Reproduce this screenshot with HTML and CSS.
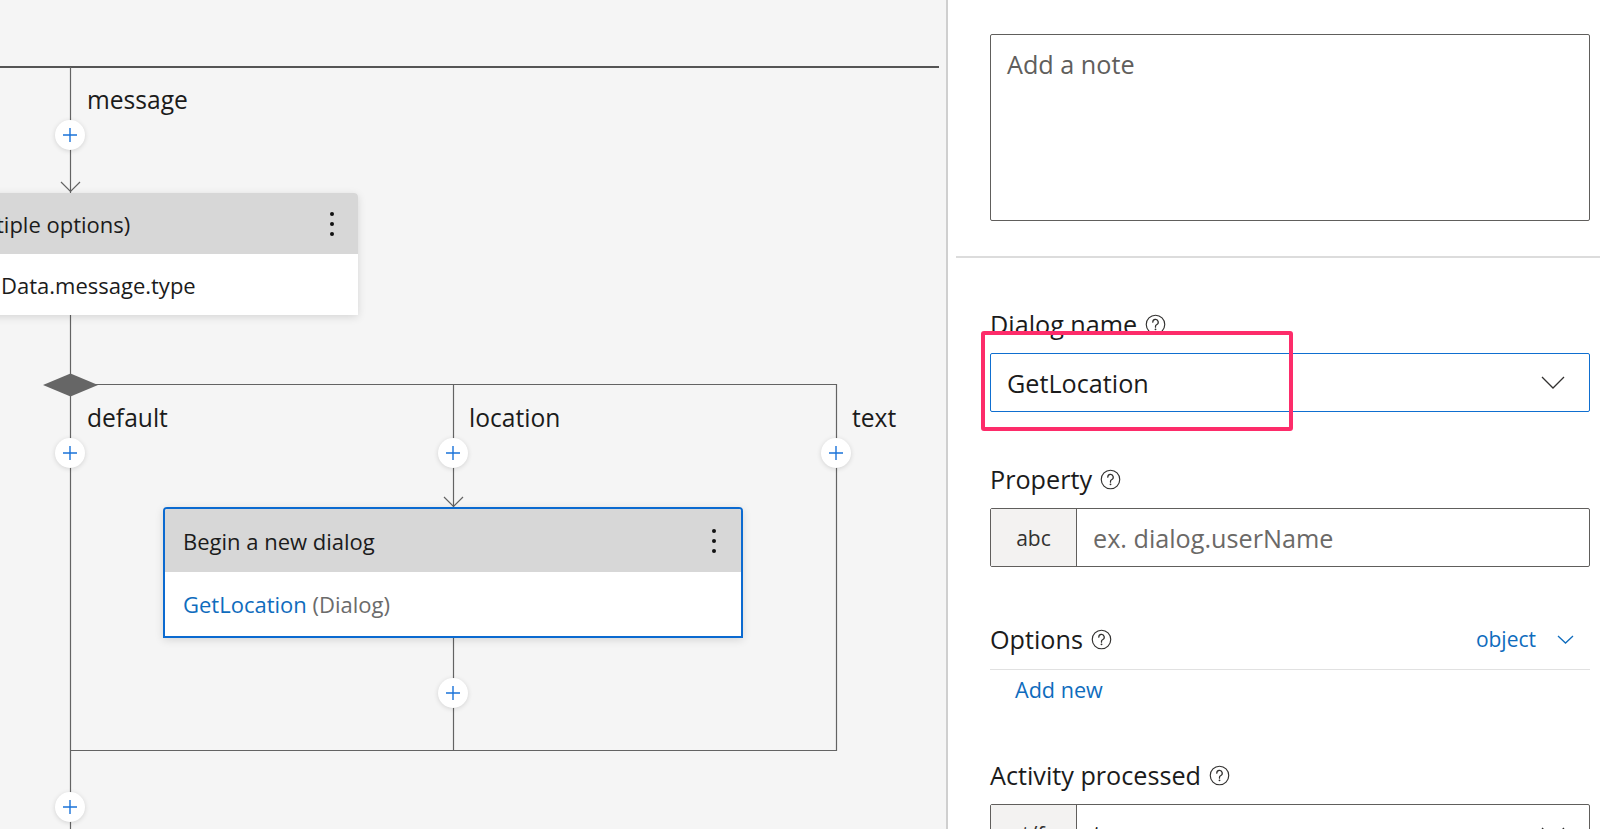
FILE: index.html
```html
<!DOCTYPE html>
<html lang="en">
<head>
<meta charset="utf-8">
<title>Dialog editor</title>
<link rel="stylesheet" href="styles.css">
</head>
<body>
<div class="app">
  <section class="canvas">
    <svg class="wires" width="946" height="829" viewBox="0 0 946 829">
      <line x1="0" y1="67" x2="939" y2="67" class="wire thick"/>
      <line x1="70.5" y1="67" x2="70.5" y2="193" class="wire"/>
      <polyline points="61,182 70.5,191.5 80,182" class="arrow"/>
      <line x1="70.5" y1="315" x2="70.5" y2="829" class="wire"/>
      <line x1="70" y1="384.5" x2="837" y2="384.5" class="wire"/>
      <line x1="453.5" y1="384" x2="453.5" y2="507" class="wire"/>
      <polyline points="444,497 453.5,506.5 463,497" class="arrow"/>
      <line x1="453.5" y1="638" x2="453.5" y2="750" class="wire"/>
      <line x1="836.5" y1="384" x2="836.5" y2="751" class="wire"/>
      <line x1="70" y1="750.5" x2="837" y2="750.5" class="wire"/>
      <polygon points="43,385 70.5,373.5 98,385 70.5,396.5" class="diamond"/>
    </svg>

    <span class="edge-label lbl-message">message</span>
    <span class="edge-label lbl-default">default</span>
    <span class="edge-label lbl-location">location</span>
    <span class="edge-label lbl-text">text</span>

    <div class="node node-switch">
      <div class="node-head"><span>tiple options)</span><span class="kebab"><i></i><i></i><i></i></span></div>
      <div class="node-body">Data.message.type</div>
    </div>

    <div class="node node-begin">
      <div class="node-head"><span>Begin a new dialog</span><span class="kebab"><i></i><i></i><i></i></span></div>
      <div class="node-body"><span class="link">GetLocation</span>&nbsp;<span class="muted">(Dialog)</span></div>
    </div>

    <button class="add p1" aria-label="Add"><svg width="14" height="14" viewBox="0 0 14 14"><path d="M7 0v14M0 7h14"/></svg></button>
    <button class="add p2" aria-label="Add"><svg width="14" height="14" viewBox="0 0 14 14"><path d="M7 0v14M0 7h14"/></svg></button>
    <button class="add p3" aria-label="Add"><svg width="14" height="14" viewBox="0 0 14 14"><path d="M7 0v14M0 7h14"/></svg></button>
    <button class="add p4" aria-label="Add"><svg width="14" height="14" viewBox="0 0 14 14"><path d="M7 0v14M0 7h14"/></svg></button>
    <button class="add p5" aria-label="Add"><svg width="14" height="14" viewBox="0 0 14 14"><path d="M7 0v14M0 7h14"/></svg></button>
    <button class="add p6" aria-label="Add"><svg width="14" height="14" viewBox="0 0 14 14"><path d="M7 0v14M0 7h14"/></svg></button>
  </section>

  <aside class="panel">
    <div class="note">Add a note</div>
    <div class="rule"></div>

    <div class="field field-dialog">
      <div class="label">Dialog name <svg class="help" width="21" height="21" viewBox="0 0 20 20"><circle cx="10" cy="10" r="8.8"/><path d="M7.4 7.8a2.6 2.6 0 1 1 3.6 2.4c-.7.3-1 .8-1 1.5v.9"/><circle class="dot" cx="10" cy="14.6" r=".9"/></svg></div>
      <div class="select">
        <span>GetLocation</span>
        <svg class="chev" width="24" height="13" viewBox="0 0 24 13"><path d="M1 1l11 11L23 1"/></svg>
      </div>
      <div class="highlight"></div>
    </div>

    <div class="field">
      <div class="label">Property <svg class="help" width="21" height="21" viewBox="0 0 20 20"><circle cx="10" cy="10" r="8.8"/><path d="M7.4 7.8a2.6 2.6 0 1 1 3.6 2.4c-.7.3-1 .8-1 1.5v.9"/><circle class="dot" cx="10" cy="14.6" r=".9"/></svg></div>
      <div class="input">
        <span class="prefix">abc</span>
        <span class="placeholder">ex. dialog.userName</span>
      </div>
    </div>

    <div class="options-row">
      <div class="label">Options <svg class="help" width="21" height="21" viewBox="0 0 20 20"><circle cx="10" cy="10" r="8.8"/><path d="M7.4 7.8a2.6 2.6 0 1 1 3.6 2.4c-.7.3-1 .8-1 1.5v.9"/><circle class="dot" cx="10" cy="14.6" r=".9"/></svg></div>
      <div class="type-pick">
        <span>object</span>
        <svg class="chev-small" width="17" height="9" viewBox="0 0 17 9"><path d="M1 1l7.5 7L16 1"/></svg>
      </div>
    </div>
    <div class="thin-rule"></div>
    <div class="add-new">Add new</div>

    <div class="field field-last">
      <div class="label">Activity processed <svg class="help" width="21" height="21" viewBox="0 0 20 20"><circle cx="10" cy="10" r="8.8"/><path d="M7.4 7.8a2.6 2.6 0 1 1 3.6 2.4c-.7.3-1 .8-1 1.5v.9"/><circle class="dot" cx="10" cy="14.6" r=".9"/></svg></div>
      <div class="input">
        <span class="prefix">t/f</span>
        <span class="value">true</span>
        <svg class="chev" width="24" height="13" viewBox="0 0 24 13"><path d="M1 1l11 11L23 1"/></svg>
      </div>
    </div>
  </aside>
</div>
</body>
</html>
```

FILE: styles.css
```css
* { box-sizing: border-box; }

html, body {
  margin: 0;
  padding: 0;
  height: 829px;
  overflow: hidden;
  background: #ffffff;
  font-family: "Segoe UI", "Open Sans", sans-serif;
  color: #1b1b1b;
}

.app {
  display: flex;
  width: 1600px;
  height: 829px;
}

/* ---------- canvas ---------- */
.canvas {
  position: relative;
  flex: 0 0 946px;
  height: 829px;
  overflow: hidden;
  background: #f5f5f5;
}

.wires {
  position: absolute;
  left: 0;
  top: 0;
}

.wire {
  stroke: #636363;
  stroke-width: 1.2;
}

.wire.thick {
  stroke: #555555;
  stroke-width: 2;
}

.arrow {
  fill: none;
  stroke: #636363;
  stroke-width: 1.2;
}

.diamond {
  fill: #666666;
}

.edge-label {
  position: absolute;
  font-size: 24.6px;
  line-height: 32px;
  color: #1b1b1b;
  white-space: nowrap;
}

.lbl-message { left: 87px; top: 84px; }
.lbl-default { left: 87px; top: 402px; }
.lbl-location { left: 469px; top: 402px; }
.lbl-text { left: 852px; top: 402px; }

.node {
  position: absolute;
  background: #ffffff;
  box-shadow: 0 2px 9px rgba(0, 0, 0, 0.13);
  font-size: 22px;
  color: #1b1b1b;
}

.node-head {
  display: flex;
  align-items: center;
  justify-content: space-between;
  background: #d7d7d7;
  white-space: nowrap;
}

.node-body {
  display: flex;
  align-items: center;
  white-space: nowrap;
  background: #ffffff;
}

.kebab {
  display: flex;
  flex-direction: column;
  gap: 6px;
}

.kebab i {
  display: block;
  width: 4px;
  height: 4px;
  border-radius: 50%;
  background: #111111;
}

.node-switch {
  left: -20px;
  top: 193px;
  width: 378px;
  border-radius: 4px 4px 0 0;
}

.node-switch .node-head {
  height: 61px;
  padding: 0 24px 0 16px;
  border-radius: 4px 4px 0 0;
}

.node-switch .node-body {
  height: 61px;
  padding-left: 21px;
}

.node-begin {
  left: 163px;
  top: 507px;
  width: 580px;
  height: 131px;
  border: 2.5px solid #0b6ad0;
  border-radius: 4px 4px 0 0;
}

.node-begin .node-head {
  height: 63px;
  padding: 0 25px 0 18px;
  border-radius: 2px 2px 0 0;
}

.node-begin .node-body {
  height: 63px;
  padding-left: 18px;
}

.link { color: #0f6cbd; }
.muted { color: #6b6b6b; }

.add {
  position: absolute;
  width: 30px;
  height: 30px;
  padding: 0;
  border: none;
  border-radius: 50%;
  background: #ffffff;
  box-shadow: 0 1px 5px rgba(0, 0, 0, 0.14);
  display: flex;
  align-items: center;
  justify-content: center;
}

.add svg path {
  stroke: #1a73d9;
  stroke-width: 1.4;
  fill: none;
}

.p1 { left: 55px; top: 120px; }
.p2 { left: 55px; top: 438px; }
.p3 { left: 438px; top: 438px; }
.p4 { left: 821px; top: 438px; }
.p5 { left: 438px; top: 678px; }
.p6 { left: 55px; top: 792px; }

/* ---------- properties panel ---------- */
.panel {
  flex: 1;
  height: 829px;
  overflow: hidden;
  border-left: 2px solid #cfcfcf;
  padding: 34px 10px 0 42px;
  display: flex;
  flex-direction: column;
}

.note {
  flex: 0 0 187px;
  border: 1px solid #605e5c;
  border-radius: 2px;
  padding: 11px 16px;
  font-size: 25.2px;
  line-height: 36px;
  color: #605e5c;
}

.rule {
  flex: 0 0 2px;
  margin: 35px -10px 0 -34px;
  background: #dcdcdc;
}

.field {
  position: relative;
  margin-top: 48px;
  display: flex;
  flex-direction: column;
}

.field + .field { margin-top: 49px; }

.label {
  display: flex;
  align-items: center;
  gap: 8px;
  height: 36px;
  font-size: 25.2px;
  line-height: 36px;
  color: #1b1b1b;
  white-space: nowrap;
}

.help {
  flex: 0 0 21px;
  margin-top: 1px;
}

.help circle {
  fill: none;
  stroke: #323130;
  stroke-width: 1.1;
}

.help path {
  fill: none;
  stroke: #323130;
  stroke-width: 1.2;
  stroke-linecap: round;
}

.help circle.dot {
  fill: #323130;
  stroke: none;
}

.select {
  margin-top: 11px;
  height: 59px;
  border: 1px solid #0f6fd0;
  border-radius: 2px;
  display: flex;
  align-items: center;
  justify-content: space-between;
  padding: 0 24px 0 16px;
  font-size: 25.2px;
  color: #1b1b1b;
}

.chev path {
  fill: none;
  stroke: #323130;
  stroke-width: 1.3;
}

.highlight {
  position: absolute;
  left: -9px;
  top: 25px;
  width: 312px;
  height: 100px;
  border: 4px solid #fd2c6a;
  border-radius: 3px;
}

.input {
  margin-top: 11px;
  height: 59px;
  border: 1px solid #605e5c;
  border-radius: 2px;
  display: flex;
  align-items: center;
  font-size: 25.2px;
}

.prefix {
  flex: 0 0 86px;
  align-self: stretch;
  display: flex;
  align-items: center;
  justify-content: center;
  background: #f3f2f1;
  border-right: 1px solid #605e5c;
  font-size: 21px;
  color: #323130;
}

.placeholder {
  padding-left: 16px;
  color: #6b6967;
}

.value {
  flex: 1;
  padding-left: 16px;
  color: #1b1b1b;
}

.input .chev { margin-right: 24px; }

.options-row {
  margin-top: 54px;
  height: 36px;
  display: flex;
  align-items: center;
  justify-content: space-between;
}

.type-pick {
  display: flex;
  align-items: center;
  gap: 21px;
  padding-right: 16px;
  font-size: 21px;
  color: #0f6cbd;
}

.chev-small path {
  fill: none;
  stroke: #0f6cbd;
  stroke-width: 1.3;
}

.thin-rule {
  flex: 0 0 1px;
  margin-top: 12px;
  background: #e1e1e1;
}

.add-new {
  margin-top: 5px;
  padding-left: 25px;
  font-size: 21.6px;
  line-height: 30px;
  color: #0f6cbd;
}

.field.field-last { margin-top: 52px; }
```
